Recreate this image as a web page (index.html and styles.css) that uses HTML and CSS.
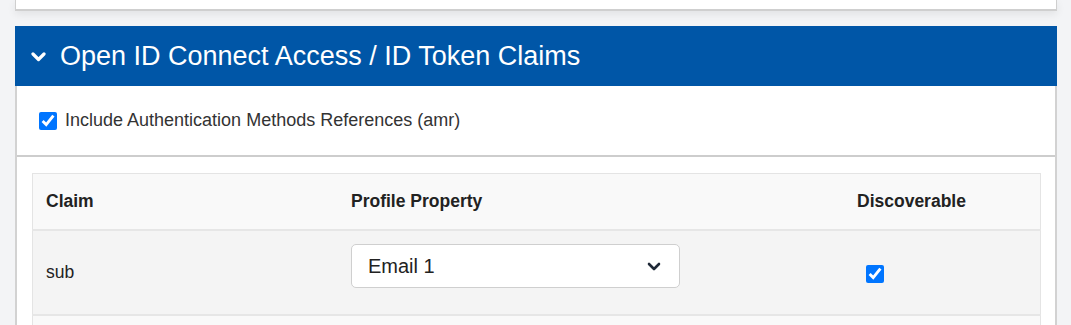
FILE: index.html
```html
<!DOCTYPE html>
<html lang="en">
<head>
    <meta charset="UTF-8">
    <meta name="viewport" content="width=device-width, initial-scale=1.0">
    <title>Open ID Connect Claims</title>
    <link rel="stylesheet" href="styles.css">
</head>
<body>

<div class="cardTop"></div>

<div class="panel">
    <div class="panelHeader">
        <svg class="chevron" width="15" height="10" viewBox="0 0 15 10">
            <path d="M2 2 L7.5 7.5 L13 2" fill="none" stroke="#fff" stroke-width="3.2" stroke-linecap="round" stroke-linejoin="round"/>
        </svg>
        <span class="panelTitle">Open ID Connect Access / ID Token Claims</span>
    </div>

    <div class="panelBody">
        <div class="optionRow">
            <label><input type="checkbox" class="check" checked> Include Authentication Methods References (amr)</label>
        </div>

        <div class="claims">
            <table class="claimTable">
                <thead>
                    <tr>
                        <th class="colClaim">Claim</th>
                        <th class="colProp">Profile Property</th>
                        <th class="colDisc">Discoverable</th>
                    </tr>
                </thead>
                <tbody>
                    <tr>
                        <td>sub</td>
                        <td class="propCell">
                            <div class="selectWrap">
                                <select class="propSelect">
                                    <option>Email 1</option>
                                    <option>Username</option>
                                    <option>User ID</option>
                                </select>
                                <svg class="selectArrow" width="14" height="9" viewBox="0 0 14 9">
                                    <path d="M2 2 L7 7 L12 2" fill="none" stroke="#1f2937" stroke-width="2.6" stroke-linecap="round" stroke-linejoin="round"/>
                                </svg>
                            </div>
                        </td>
                        <td class="discCell"><input type="checkbox" class="check" checked></td>
                    </tr>
                    <tr class="altRow">
                        <td></td>
                        <td></td>
                        <td></td>
                    </tr>
                </tbody>
            </table>
        </div>
    </div>
</div>

</body>
</html>
```

FILE: styles.css
```css
body {
    margin: 0;
    padding: 0 14px 0 15px;
    background-color: #f3f4f6;
    font-family: "Liberation Sans", Arial, sans-serif;
    color: #333;
}
.cardTop {
    height: 9px;
    background-color: #fff;
    border: 1px solid #cfcfcf;
    border-top: none;
    border-bottom-width: 2px;
    box-shadow: 0 3px 8px rgba(0, 0, 0, 0.08);
}
.panel {
    margin-top: 15px;
}
.panelHeader {
    display: flex;
    align-items: center;
    height: 60px;
    padding-left: 16px;
    background-color: #0056a7;
    color: #fff;
}
.chevron {
    margin-right: 14px;
    margin-top: 1px;
}
.panelTitle {
    font-size: 27px;
}
.panelBody {
    background-color: #fff;
    border-left: 2px solid #d2d2d2;
    border-right: 2px solid #d2d2d2;
}
.optionRow {
    display: flex;
    align-items: center;
    height: 69px;
    padding-left: 22px;
    border-bottom: 2px solid #cdcdcd;
    font-size: 18px;
}
.optionRow label {
    display: flex;
    align-items: center;
}
.check {
    width: 18px;
    height: 18px;
    margin: 0 8px 0 0;
    accent-color: #0075ff;
}
.claims {
    padding: 16px 14px 0 15px;
}
.claimTable {
    width: 100%;
    border-collapse: collapse;
    border: 1px solid #e4e4e4;
    font-size: 17.5px;
    color: #222;
}
.claimTable th {
    height: 55px;
    padding: 0 13px;
    text-align: left;
    background-color: #f9f9f9;
    border-bottom: 2px solid #e6e6e6;
}
.claimTable tbody tr {
    height: 85px;
}
.claimTable td {
    padding: 0 13px;
    background-color: #f4f4f4;
    border-bottom: 2px solid #e6e6e6;
}
.claimTable .altRow td {
    background-color: #f9f9f9;
}
.colClaim {
    width: 279px;
}
.colProp {
    width: 480px;
}
.propCell {
    vertical-align: top;
    padding-top: 13px !important;
}
.discCell {
    padding-left: 22px !important;
}
.discCell .check {
    margin-top: 8px;
}
.selectWrap {
    position: relative;
    width: 329px;
}
.propSelect {
    width: 100%;
    height: 44px;
    padding: 0 16px;
    appearance: none;
    background-color: #fff;
    border: 1px solid #cfcfcf;
    border-radius: 5px;
    font-family: "Liberation Sans", Arial, sans-serif;
    font-size: 20px;
    color: #222;
}
.selectArrow {
    position: absolute;
    right: 19px;
    top: 18px;
    pointer-events: none;
}
```
